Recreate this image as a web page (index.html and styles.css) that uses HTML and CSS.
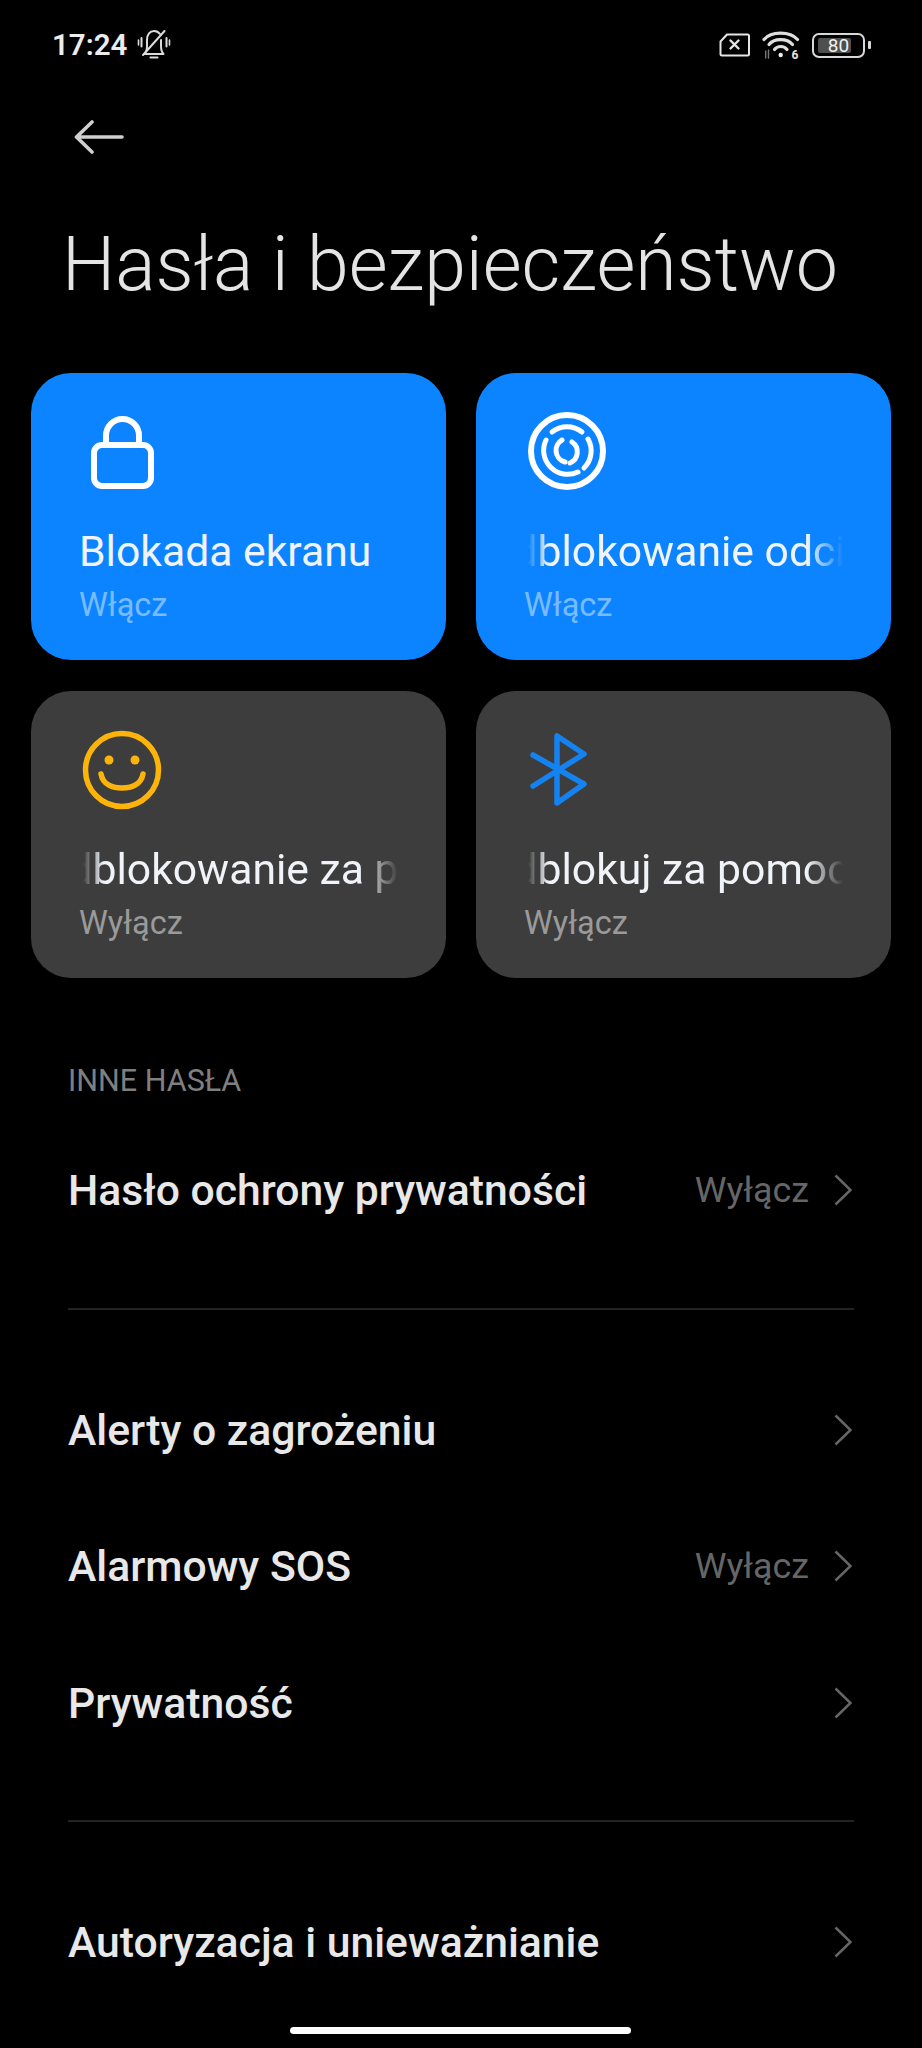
FILE: index.html
```html
<!DOCTYPE html>
<html lang="pl">
<head>
    <meta charset="UTF-8" />
    <meta name="viewport" content="width=device-width, initial-scale=1.0"/>
    <title>Hasła i bezpieczeństwo</title>
    <link rel="stylesheet" href="styles.css">
</head>
<body>

    <div class="status-bar">
        <div class="status-left">
            <span class="clock">17:24</span>
            <svg class="icon-bell" viewBox="0 0 44 40" fill="none" stroke="#dcdcdc" stroke-width="2" stroke-linecap="round" stroke-linejoin="round">
                <path d="M27 9C25.500 7 23.500 6 21 6 17 6 14 9.500 14 15v6c0 3-.5 6-2.500 8h19c-2-2-2.500-5-2.500-8v-6"/>
                <path d="M17.500 32.500h7"/>
                <path d="M10 30 31.500 6"/>
                <path d="M8.500 13v8.500M33.500 13v8.500" stroke-width="2"/>
                <path d="M5.500 15v5M36.500 15v5" stroke-width="1.600"/>
            </svg>
        </div>
        <div class="status-right">
            <svg class="icon-sim" viewBox="0 0 31 24" fill="none" stroke="#e6e6e6" stroke-width="2" stroke-linejoin="round">
                <path d="M8 1.500h20.500a1.500 1.500 0 0 1 1.500 1.500v18a1.500 1.500 0 0 1-1.500 1.500H3a1.500 1.500 0 0 1-1.500-1.500V8.500z"/>
                <path d="M11.500 7.500l8 8M19.500 7.500l-8 8" stroke-width="2.400" stroke-linecap="round"/>
            </svg>
            <svg class="icon-wifi" viewBox="0 0 55 40" fill="none" stroke="#dedede" stroke-width="3.200" stroke-linecap="round">
                <path d="M10 14.500C17 6 36 6 43.500 14.500"/>
                <path d="M15 19.500C20 13 33 13 38.500 19.500"/>
                <path d="M20.500 24.500C23.500 20.500 30 20.500 33 24.500"/>
                <circle cx="26.700" cy="30" r="2.200" fill="#f0f0f0" stroke="none"/>
                <path d="M11.700 26v7M14.500 25v8" stroke="#777" stroke-width="1.400"/>
                <text class="wifi-six" x="37.500" y="33.500">6</text>
            </svg>
            <div class="battery">
                <div class="battery-body">
                    <div class="battery-fill"></div>
                    <span class="battery-text">80</span>
                </div>
                <div class="battery-nub"></div>
            </div>
        </div>
    </div>

    <div class="nav">
        <svg class="icon-back" viewBox="0 0 50 34" fill="none" stroke="#cfcfcf" stroke-width="3.600" stroke-linecap="round" stroke-linejoin="round">
            <path d="M48 17H3M18 2 2.500 17 18 32"/>
        </svg>
    </div>

    <h1 class="page-title">Hasła i bezpieczeństwo</h1>

    <div class="card-grid">
        <div class="card card-on">
            <svg class="card-icon" viewBox="0 0 80 80" fill="none" stroke="#fff" stroke-width="6">
                <rect x="12" y="35" width="57" height="41" rx="8"/>
                <path d="M24 35V25.500a16.500 16.500 0 0 1 33 0V35"/>
            </svg>
            <div class="card-title"><span>Blokada ekranu</span></div>
            <div class="card-sub">Włącz</div>
        </div>
        <div class="card card-on">
            <svg class="card-icon" viewBox="0 0 80 80" fill="none" stroke="#fff" stroke-width="5" stroke-linecap="round">
                <circle cx="40" cy="41" r="36" stroke-width="6"/>
                <path d="M25 22A24 24 0 0 1 55 22"/>
                <path d="M61 29A24 24 0 0 1 57 58"/>
                <path d="M19 30A24 24 0 0 0 51 62"/>
                <path d="M35 30A12 12 0 0 0 38 52"/>
                <path d="M45 32A12 12 0 0 1 43 53"/>
            </svg>
            <div class="card-title card-scroll"><span class="scrolled">Odblokowanie odciskiem palca</span></div>
            <div class="card-sub">Włącz</div>
        </div>
        <div class="card card-off">
            <svg class="card-icon" viewBox="0 0 80 80" fill="none" stroke="#fdb40a" stroke-width="5.500" stroke-linecap="round">
                <circle cx="40" cy="42" r="36.500"/>
                <circle cx="27" cy="32" r="4.500" fill="#fdb40a" stroke="none"/>
                <circle cx="53" cy="32" r="4.500" fill="#fdb40a" stroke="none"/>
                <path d="M19 46c2 11 12 14 21 14s19-3 21-14"/>
            </svg>
            <div class="card-title card-scroll"><span class="scrolled">Odblokowanie za pomocą twarzy</span></div>
            <div class="card-sub">Wyłącz</div>
        </div>
        <div class="card card-off">
            <svg class="card-icon" viewBox="0 0 80 80" fill="none" stroke="#1482f0" stroke-width="5.500" stroke-linecap="round" stroke-linejoin="round">
                <path d="M6 58 57 26 30 8v67l27-19L6 27"/>
            </svg>
            <div class="card-title card-scroll"><span class="scrolled">Odblokuj za pomocą urządzenia</span></div>
            <div class="card-sub">Wyłącz</div>
        </div>
    </div>

    <div class="section-label">INNE HASŁA</div>

    <div class="row">
        <span class="row-title">Hasło ochrony prywatności</span>
        <span class="row-value">Wyłącz</span>
        <svg class="chevron" viewBox="0 0 18 32"><path d="M1.500 1.500 16.500 16 1.500 30.500"/></svg>
    </div>

    <div class="divider"></div>

    <div class="row">
        <span class="row-title">Alerty o zagrożeniu</span>
        <svg class="chevron" viewBox="0 0 18 32"><path d="M1.500 1.500 16.500 16 1.500 30.500"/></svg>
    </div>
    <div class="row">
        <span class="row-title">Alarmowy SOS</span>
        <span class="row-value">Wyłącz</span>
        <svg class="chevron" viewBox="0 0 18 32"><path d="M1.500 1.500 16.500 16 1.500 30.500"/></svg>
    </div>
    <div class="row">
        <span class="row-title">Prywatność</span>
        <svg class="chevron" viewBox="0 0 18 32"><path d="M1.500 1.500 16.500 16 1.500 30.500"/></svg>
    </div>

    <div class="divider"></div>

    <div class="row">
        <span class="row-title">Autoryzacja i unieważnianie</span>
        <svg class="chevron" viewBox="0 0 18 32"><path d="M1.500 1.500 16.500 16 1.500 30.500"/></svg>
    </div>

    <div class="home-bar"></div>

</body>
</html>
```

FILE: styles.css
```css
html, body {
    height: 2048px;
    overflow: hidden;
}
body {
    font-family: Roboto, 'Noto Sans', sans-serif;
    background: #000;
    color: #e6e6e6;
    margin: 0;
}

/* status bar */
.status-bar {
    height: 90px;
    padding: 0 51px 0 52px;
    display: flex;
    align-items: center;
    justify-content: space-between;
    box-sizing: border-box;
}
.status-left, .status-right {
    display: flex;
    align-items: center;
}
.clock {
    font-size: 29.5px;
    font-weight: 600;
    color: #ececec;
}
.icon-bell {
    width: 44px;
    height: 40px;
    margin-left: 6px;
}
.icon-sim {
    width: 31px;
    height: 24px;
}
.icon-wifi {
    width: 55px;
    height: 40px;
    margin-left: 4px;
}
.wifi-six {
    font-size: 12px;
    font-weight: 700;
    fill: #e6e6e6;
    stroke: none;
}
.battery {
    display: flex;
    align-items: center;
    margin-left: 3px;
}
.battery-body {
    width: 53px;
    height: 25px;
    border: 2.5px solid #d8d8d8;
    border-radius: 7px;
    box-sizing: border-box;
    display: flex;
    align-items: center;
    justify-content: center;
    position: relative;
}
.battery-fill {
    position: absolute;
    left: 4px;
    top: 3px;
    bottom: 3px;
    width: 33px;
    background: #4f4f4f;
    border-radius: 2px;
}
.battery-text {
    position: relative;
    font-size: 19px;
    color: #f2f2f2;
}
.battery-nub {
    width: 3px;
    height: 8px;
    margin-left: 3px;
    background: #d8d8d8;
    border-radius: 1px;
}

/* header */
.nav {
    height: 93px;
    padding-left: 74px;
    display: flex;
    align-items: center;
}
.icon-back {
    width: 50px;
    height: 34px;
}
.page-title {
    margin: 36px 0 64px 62px;
    font-size: 75.2px;
    line-height: 90px;
    font-weight: 300;
    color: #e4e4e4;
    white-space: nowrap;
}

/* cards */
.card-grid {
    display: grid;
    grid-template-columns: 414.5px 414.5px;
    grid-auto-rows: 287px;
    gap: 31px 30.5px;
    padding-left: 31px;
}
.card {
    border-radius: 40px;
    padding: 37px 48px 0 48px;
    box-sizing: border-box;
    overflow: hidden;
}
.card-on {
    background: #0d84ff;
}
.card-off {
    background: #3d3d3d;
}
.card-icon {
    display: block;
    width: 80px;
    height: 80px;
    margin: 0 0 37px 3px;
    overflow: visible;
}
.card-title {
    font-size: 42.7px;
    line-height: 48px;
    white-space: nowrap;
    overflow: hidden;
    color: #f0f4f8;
}
.card-scroll {
    -webkit-mask-image: linear-gradient(90deg, transparent 4px, #000 24px, #000 calc(100% - 36px), transparent 100%);
    mask-image: linear-gradient(90deg, transparent 4px, #000 24px, #000 calc(100% - 36px), transparent 100%);
}
.scrolled {
    display: inline-block;
    margin-left: -40px;
}
.card-sub {
    margin-top: 10px;
    font-size: 32.5px;
    line-height: 40px;
}
.card-on .card-sub {
    color: #78bcff;
}
.card-off .card-sub {
    color: #9a9a9a;
}

/* settings list */
.section-label {
    margin: 84px 0 22px 68px;
    font-size: 30.5px;
    line-height: 38px;
    color: #7f7f7f;
}
.row {
    height: 136.5px;
    padding: 0 70px 0 68px;
    display: flex;
    align-items: center;
}
.row-title {
    flex: 1;
    font-size: 42.7px;
    font-weight: 500;
    color: #e8e8e8;
}
.row-value {
    font-size: 35.8px;
    color: #666;
    margin-right: 25px;
}
.chevron {
    width: 18px;
    height: 32px;
    fill: none;
    stroke: #666;
    stroke-width: 2.5;
}
.divider {
    height: 2px;
    margin: 49px 68px 52px;
    background: #232323;
}
.home-bar {
    width: 341px;
    height: 7px;
    margin: 16px 0 0 290px;
    background: #fff;
    border-radius: 4px;
}
```
